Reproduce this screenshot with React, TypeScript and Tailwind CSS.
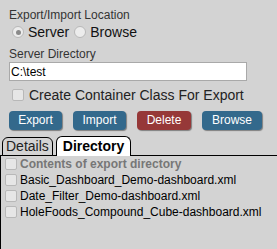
import React from "react";

function Radio({ checked }: { checked?: boolean }) {
  return (
    <span className="inline-flex h-[12px] w-[12px] items-center justify-center rounded-full border border-[#b8b8b8] bg-[#ececec]">
      {checked && <span className="h-[5px] w-[5px] rounded-full bg-[#8a8a8a]" />}
    </span>
  );
}

function Box() {
  return <span className="inline-block h-[12px] w-[12px] shrink-0 rounded-[2px] border border-[#b8b8b8] bg-[#e6e6e6]" />;
}

function Btn({ label, red, w }: { label: string; red?: boolean; w: string }) {
  return (
    <button
      className={`${w} h-[19px] rounded-[4px] text-[12px] leading-[19px] text-white shadow-[1px_1px_1px_rgba(0,0,0,0.4)] ${
        red ? "bg-[#963838]" : "bg-[#33698c]"
      }`}
    >
      {label}
    </button>
  );
}

export default function App() {
  const files = [
    "Basic_Dashboard_Demo-dashboard.xml",
    "Date_Filter_Demo-dashboard.xml",
    "HoleFoods_Compound_Cube-dashboard.xml",
  ];
  return (
    <div
      className="flex h-[249px] w-[277px] flex-col bg-[#d3d3d3] text-[#333]"
      style={{ fontFamily: '"Liberation Sans", Arial, sans-serif' }}
    >
      <div className="px-[9px] pt-[8px]">
        <div className="text-[12px] leading-[14px]">Export/Import Location</div>
        <div className="mt-[2px] flex items-center pl-[3px] text-[14px] leading-[16px] text-[#111]">
          <Radio checked />
          <span className="ml-[4px]">Server</span>
          <span className="ml-[5px] flex"><Radio /></span>
          <span className="ml-[4px]">Browse</span>
        </div>
        <div className="mt-[7px] text-[12px] leading-[14px]">Server Directory</div>
        <div className="mt-[1px] flex h-[19px] w-[238px] items-center border border-[#a9a9a9] bg-white pl-[1px] text-[12px] text-black">
          C:\test
        </div>
        <div className="mt-[6px] flex items-center pl-[3px] text-[14px] leading-[16px] text-[#222]">
          <Box />
          <span className="ml-[5px]">Create Container Class For Export</span>
        </div>
        <div className="mt-[8px] flex gap-x-[11px]">
          <Btn label="Export" w="w-[53px]" />
          <Btn label="Import" w="w-[53px]" />
          <Btn label="Delete" w="w-[54px]" red />
          <Btn label="Browse" w="w-[60px]" />
        </div>
      </div>
      <div className="relative z-10 mt-[6px] mb-[-1px] flex items-end pl-[2px]">
        <div className="h-[19px] rounded-t-[6px] border border-black bg-[#d3d3d3] px-[3px] text-[14px] leading-[17px] text-[#222]">
          Details
        </div>
        <div className="ml-[3px] h-[20px] rounded-t-[6px] border border-b-0 border-black bg-white px-[6px] text-[14px] font-bold leading-[18px] text-black">
          Directory
        </div>
      </div>
      <div className="flex-1 border-l border-t border-black pl-[4px] pt-[0px] text-[12px] leading-[16px]">
        <div className="flex items-center font-bold text-[#777]">
          <Box />
          <span className="ml-[3px]">Contents of export directory</span>
        </div>
        {files.map((f) => (
          <div key={f} className="flex items-center text-black">
            <Box />
            <span className="ml-[3px]">{f}</span>
          </div>
        ))}
      </div>
    </div>
  );
}
